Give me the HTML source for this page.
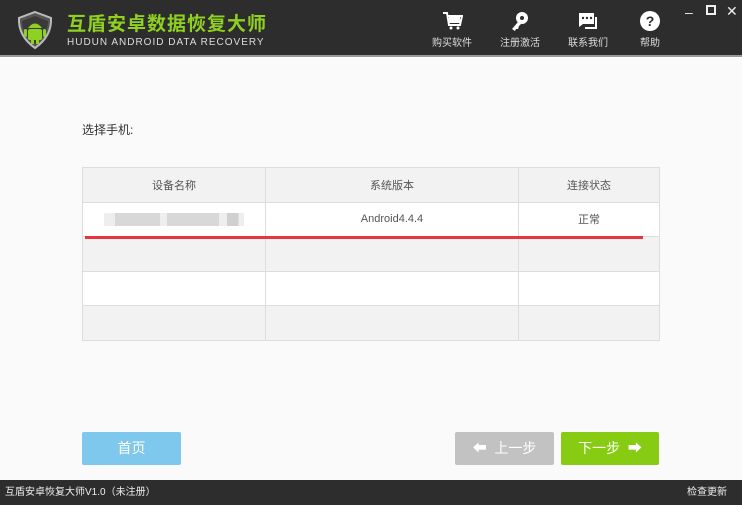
<!DOCTYPE html>
<html><head><meta charset="utf-8"><style>
*{margin:0;padding:0;box-sizing:border-box}
body{width:742px;height:505px;background:#fafafa;font-family:"Liberation Sans","Noto Sans CJK SC",sans-serif;position:relative;overflow:hidden}
.hdr{position:absolute;left:0;top:0;width:742px;height:57px;background:#2d2d2d;border-bottom:2px solid #999}
.t1{position:absolute;left:67px;top:9px;color:#8fd11f;font-size:19px;font-weight:bold;letter-spacing:1px}
.t2{position:absolute;left:67px;top:37px;color:#ddd;font-size:10px;letter-spacing:1px}
.nav{position:absolute;top:0;width:60px;text-align:center;color:#ddd;font-size:10px}
.nav svg{display:block;margin:10px auto 2px}
.win{position:absolute;top:4px;color:#eee;font-size:14px}
table{position:absolute;left:82px;top:167px;width:578px;border-collapse:collapse;font-size:11px;color:#555}
td{border:1px solid #ddd;height:34.5px;text-align:center}
tr.g td{background:#f2f2f2}
tr.w td{background:#fff}
.foot{position:absolute;left:0;top:480px;width:742px;height:25px;background:#2d2d2d;color:#eee;font-size:10px;line-height:25px}
.btn{position:absolute;top:432px;height:33px;border-radius:2px;color:#fff;font-size:14px;line-height:33px;text-align:center}
</style></head><body>
<div class="hdr">
<svg style="position:absolute;left:16px;top:10px" width="38" height="40" viewBox="0 0 38 40"><path d="M19 2 L35 8 Q36 26 19 38 Q2 26 3 8 Z" fill="#555" stroke="#bbb" stroke-width="2"/><path d="M19 6 L32 11 Q32 25 19 34 Q6 25 6 11 Z" fill="#3a3a3a"/><path d="M12 18 Q19 9 26 18 Z" fill="#8fd11f"/><rect x="12" y="19" width="14" height="11" rx="2" fill="#8fd11f"/><rect x="8" y="19" width="3" height="8" rx="1.5" fill="#8fd11f"/><rect x="27" y="19" width="3" height="8" rx="1.5" fill="#8fd11f"/><rect x="15" y="29" width="3" height="5" fill="#8fd11f"/><rect x="20" y="29" width="3" height="5" fill="#8fd11f"/></svg>
<div class="t1">互盾安卓数据恢复大师</div>
<div class="t2">HUDUN ANDROID DATA RECOVERY</div>
<div class="nav" style="left:422px"><svg width="22" height="22" viewBox="0 0 22 22"><path d="M2 3h4l2 12h11l2-9H7" fill="none" stroke="#fff" stroke-width="2"/><rect x="8" y="7" width="11" height="6" fill="#fff"/><circle cx="10" cy="18" r="1.5" fill="#fff"/><circle cx="17" cy="18" r="1.5" fill="#fff"/></svg>购买软件</div>
<div class="nav" style="left:490px"><svg width="22" height="22" viewBox="0 0 22 22"><circle cx="13" cy="8" r="6" fill="#fff"/><circle cx="13" cy="8" r="2" fill="#2d2d2d"/><path d="M9 12 L3 19 L6 21 L7 19 L9 19 L10 16 L12 14Z" fill="#fff"/></svg>注册激活</div>
<div class="nav" style="left:558px"><svg width="22" height="22" viewBox="0 0 22 22"><path d="M2 3h15v11H6l-4 3z" fill="#fff"/><circle cx="6" cy="8" r="1.2" fill="#2d2d2d"/><circle cx="10" cy="8" r="1.2" fill="#2d2d2d"/><circle cx="14" cy="8" r="1.2" fill="#2d2d2d"/><path d="M19 7v11H8" fill="none" stroke="#fff" stroke-width="2"/></svg>联系我们</div>
<div class="nav" style="left:620px"><svg width="22" height="22" viewBox="0 0 22 22"><circle cx="11" cy="11" r="10" fill="#fff"/><text x="11" y="16" text-anchor="middle" font-size="14" font-weight="bold" fill="#2d2d2d" font-family="Liberation Sans">?</text></svg>帮助</div>
<div class="win" style="left:685px">–</div>
<div class="win" style="left:706px;top:5px;width:10px;height:10px;border:2px solid #eee"></div>
<div class="win" style="left:726px;top:3px">✕</div>
</div>
<div style="position:absolute;left:82px;top:121px;font-size:12px;color:#333">选择手机:</div>
<table>
<tr class="g"><td style="width:183px">设备名称</td><td style="width:253px">系统版本</td><td>连接状态</td></tr>
<tr class="w"><td><div style="margin:0 auto;width:140px;height:13px;background:linear-gradient(90deg,#eee 0 8%,#d8d8d8 8% 40%,#eee 40% 45%,#d8d8d8 45% 82%,#eee 82% 88%,#d0d0d0 88% 96%,#eee 96%)"></div></td><td>Android4.4.4</td><td>正常</td></tr>
<tr class="g"><td></td><td></td><td></td></tr>
<tr class="w"><td></td><td></td><td></td></tr>
<tr class="g"><td></td><td></td><td></td></tr>
</table>
<div style="position:absolute;left:85px;top:236px;width:558px;height:3px;background:#e8343e"></div>
<div class="btn" style="left:82px;width:99px;background:#7ec8ee">首页</div>
<div class="btn" style="left:455px;width:99px;background:#c2c2c2">⬅&nbsp; 上一步</div>
<div class="btn" style="left:561px;width:98px;background:#87cc12">下一步 &nbsp;➡</div>
<div class="foot"><span style="margin-left:5px">互盾安卓恢复大师V1.0（未注册）</span><span style="position:absolute;right:15px">检查更新</span></div>
</body></html>
